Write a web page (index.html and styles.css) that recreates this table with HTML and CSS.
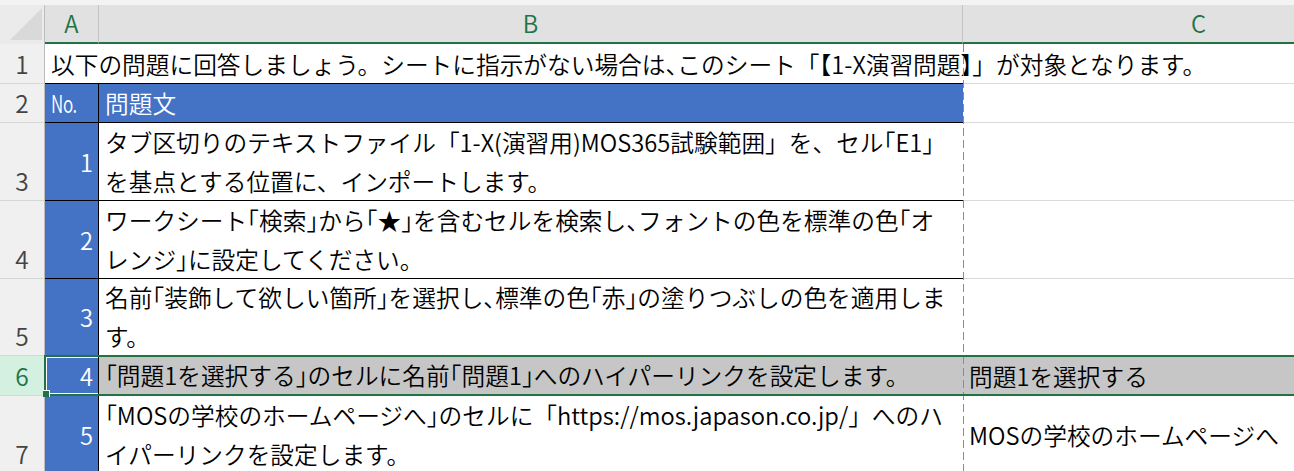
FILE: index.html
```html
<!DOCTYPE html>
<html lang="ja">
<head>
<meta charset="utf-8">
<title>1-X演習問題</title>
<link rel="stylesheet" href="styles.css">
</head>
<body>
<div class="sheet">
  <div class="strip"></div>
  <div class="corner"><svg width="45" height="39" viewBox="0 0 45 39"><polygon points="10,35 42,35 42,3" fill="#d9d9d9"/></svg></div>
  <div class="colhead">A</div>
  <div class="colhead">B</div>
  <div class="colhead">C</div>

  <div class="rowhead"><span>1</span></div>
  <div class="cell a r1"><span class="line">以下の問題に回答しましょう。シートに指示がない場合は<span class="n">、</span>このシート「【1-X演習問題】」が対象となります。</span></div>
  <div class="cell b r1"></div>
  <div class="cell c"></div>

  <div class="rowhead"><span>2</span></div>
  <div class="cell a blue head"><span class="no">No.</span></div>
  <div class="cell b blue head">問題文</div>
  <div class="cell c"></div>

  <div class="rowhead"><span>3</span></div>
  <div class="cell a blue num">1</div>
  <div class="cell b"><div class="lines">タブ区切りのテキストファイル「1-X(演習用)MOS365試験範囲」を、セル<span class="n">「</span>E1<span class="n">」</span><br>を基点とする位置に、インポートします。</div></div>
  <div class="cell c"></div>

  <div class="rowhead"><span>4</span></div>
  <div class="cell a blue num">2</div>
  <div class="cell b"><div class="lines">ワークシート<span class="n">「</span>検索<span class="n">」</span>から<span class="n">「</span>★<span class="n">」</span>を含むセルを検索し<span class="n">、</span>フォントの色を標準の色<span class="n">「</span>オ<br>レンジ<span class="n">」</span>に設定してください。</div></div>
  <div class="cell c"></div>

  <div class="rowhead"><span>5</span></div>
  <div class="cell a blue num">3</div>
  <div class="cell b"><div class="lines">名前<span class="n">「</span>装飾して欲しい箇所<span class="n">」</span>を選択し<span class="n">、</span>標準の色<span class="n">「</span>赤<span class="n">」</span>の塗りつぶしの色を適用しま<br>す。</div></div>
  <div class="cell c"></div>

  <div class="rowhead sel"><span>6</span></div>
  <div class="cell a blue num">4</div>
  <div class="cell b gray"><div class="lines"><span class="n">「</span>問題1を選択する<span class="n">」</span>のセルに名前<span class="n">「</span>問題1<span class="n">」</span>へのハイパーリンクを設定します。</div></div>
  <div class="cell c gray">問題1を選択する</div>

  <div class="rowhead"><span>7</span></div>
  <div class="cell a blue num">5</div>
  <div class="cell b"><div class="lines"><span class="n">「</span>MOSの学校のホームページへ<span class="n">」</span>のセルに「https://mos.japason.co.jp/」へのハ<br>イパーリンクを設定します。</div></div>
  <div class="cell c">MOSの学校のホームページへ</div>

  <div class="pagebreak"></div>
  <div class="selection"></div>
  <div class="active"></div>
  <div class="handle"></div>
</div>
</body>
</html>
```

FILE: styles.css
```css
* { box-sizing: border-box; }
html, body {
  margin: 0;
  padding: 0;
  background: #ffffff;
  width: 1294px;
  height: 471px;
  overflow: hidden;
}
.sheet {
  position: relative;
  display: grid;
  grid-template-columns: 45px 54px 864px 472px;
  grid-template-rows: 5px 39px 40px 39px 78px 78px 77px 40px 78px;
  font-family: "Noto Sans CJK JP", sans-serif;
  font-size: 23.7px;
  font-weight: 350;
  color: #000;
  background: #fff;
}
.strip {
  grid-column: 1 / -1;
  background: #f3f3f3;
}
.corner {
  background: #ebebeb;
  border-right: 1px solid #bdbdbd;
}
.corner svg { display: block; }
.colhead {
  background: #e1e1e1;
  color: #217346;
  border-right: 1px solid #c4c4c4;
  border-bottom: 2px solid #217346;
  display: flex;
  align-items: center;
  justify-content: center;
  line-height: 1;
}
.rowhead {
  background: #f0f0f0;
  color: #444;
  border-right: 1px solid #bdbdbd;
  border-bottom: 1px solid #d6d6d6;
  display: flex;
  align-items: flex-end;
  justify-content: center;
  font-size: 24.5px;
}
.rowhead span {
  line-height: 39px;
}
.rowhead.sel {
  background: #d3f0e0;
  color: #217346;
}
.cell {
  display: flex;
  align-items: center;
  white-space: nowrap;
  min-width: 0;
}
.cell.a, .cell.b {
  border-bottom: 1px solid #000;
}
.cell.a {
  border-right: 1px solid #000;
  padding: 0 5px 0 6px;
}
.cell.a.r1 {
  border-right: none;
  overflow: visible;
}
.cell.b {
  padding-left: 6px;
}
.cell.c {
  border-bottom: 1px solid #dadada;
  padding-left: 6px;
}
.blue {
  background: #4472c4;
  color: #fff;
}
.num {
  justify-content: flex-end;
}
.no {
  display: inline-block;
  transform: scaleX(0.72);
  transform-origin: left center;
  letter-spacing: -0.5px;
}
.gray {
  background: #c6c6c6;
}
.lines {
  line-height: 39px;
}
.n {
  font-feature-settings: "halt";
}
.pagebreak {
  position: absolute;
  left: 963px;
  top: 44px;
  bottom: 0;
  width: 1px;
  background: repeating-linear-gradient(to bottom, #8c8c8c 0 8px, transparent 8px 12px);
}
.selection {
  position: absolute;
  left: 44px;
  top: 355px;
  width: 1300px;
  height: 41px;
  border: 2px solid #217346;
  border-right: none;
}
.active {
  position: absolute;
  left: 46px;
  top: 357px;
  width: 52px;
  height: 37px;
  border: 1px solid #fff;
  border-right: none;
}
.handle {
  position: absolute;
  left: 43px;
  top: 390px;
  width: 7px;
  height: 7px;
  background: #217346;
  border-top: 1px solid #fff;
  border-right: 1px solid #fff;
}
```
